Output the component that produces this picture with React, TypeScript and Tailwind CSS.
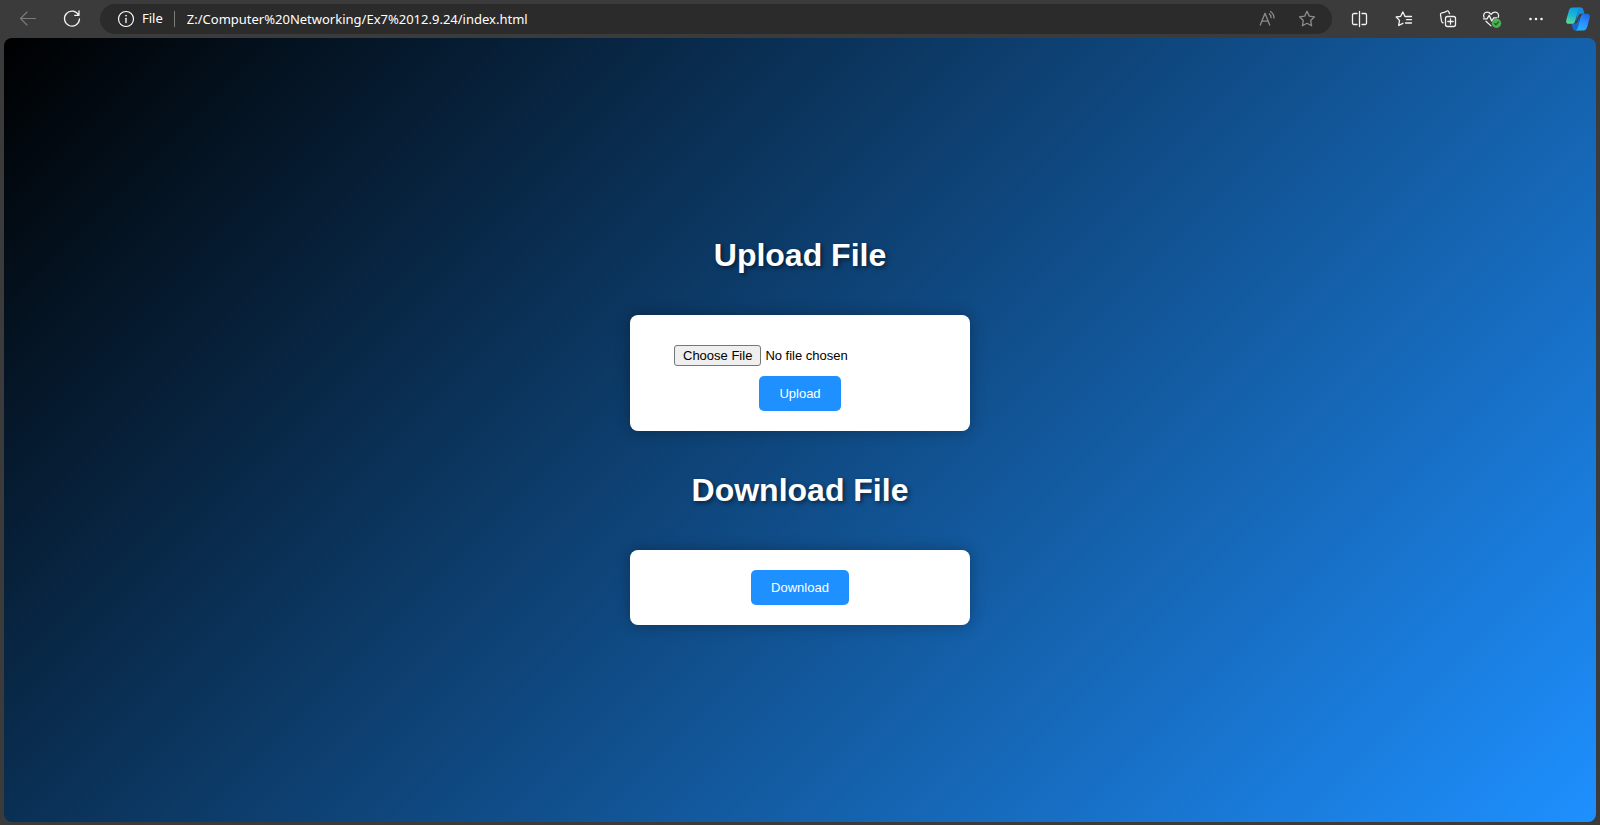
import type { ReactNode } from "react";

function Icon({ children }: { children: ReactNode }) {
  return (
    <svg
      viewBox="0 0 20 20"
      className="size-5"
      fill="none"
      stroke="currentColor"
      strokeWidth="1.3"
      strokeLinecap="round"
      strokeLinejoin="round"
      aria-hidden="true"
    >
      {children}
    </svg>
  );
}

function ToolButton({ label, className = "w-11 text-[#f2f2f2]", children }: { label: string; className?: string; children: ReactNode }) {
  return (
    <button type="button" aria-label={label} className={`flex h-8 shrink-0 items-center justify-center ${className}`}>
      {children}
    </button>
  );
}

function CopilotLogo() {
  return (
    <svg viewBox="0.400 0.400 23.200 23.200" className="size-6" aria-hidden="true">
      <defs>
        <linearGradient id="leftLeaf" x1="0.6" y1="0" x2="0.3" y2="1">
          <stop offset="0" stopColor="#0f9ae0" />
          <stop offset="0.5" stopColor="#19b8d6" />
          <stop offset="1" stopColor="#5bdc8a" />
        </linearGradient>
        <linearGradient id="rightLeaf" x1="0.7" y1="0" x2="0.3" y2="1">
          <stop offset="0" stopColor="#1f6ae6" />
          <stop offset="0.5" stopColor="#2b90ff" />
          <stop offset="1" stopColor="#23b4fb" />
        </linearGradient>
      </defs>
      <path d="M12 1h2.800c1.300 0 1.900.7 2.300 2l1.200 3.900h-3.100c-1.600 0-2.500.9-3 2.500l-2 5z" fill="#158fdc" />
      <path d="M12 23H9.200c-1.300 0-1.900-.7-2.300-2L5.500 16.300h3.400c1.600 0 2.500-.9 3-2.500l2-5z" fill="#1767cf" />
      <path d="M6.700 1h7.800c-1.300.2-1.900 1.200-2.300 2.500L9.400 13.600c-.6 2.200-1.600 3-3.600 3H3.200C.9 16.600.1 15 .7 12.700L3.200 4C3.800 2 4.700 1 6.700 1z" fill="url(#leftLeaf)" />
      <path d="M17.300 23H9.500c1.300-.2 1.900-1.200 2.300-2.500l2.800-10.600c.6-2.200 1.600-3 3.600-3h2.600c2.300 0 3.100 1.600 2.500 3.900L20.800 20c-.6 2-1.500 3-3.500 3z" fill="url(#rightLeaf)" />
    </svg>
  );
}

function Toolbar() {
  return (
    <header className="flex h-[38px] items-center bg-[#3b3b3b] pr-0.5 pl-1.5 font-['Noto_Sans',sans-serif] text-[13px] text-white">
      <ToolButton label="Back" className="w-11 text-[#7b7b7b]">
        <Icon>
          <path d="M17.500 9.500H2.500M9 3 2.500 9.500 9 16" strokeWidth="1.150" />
        </Icon>
      </ToolButton>
      <ToolButton label="Refresh">
        <Icon>
          <path d="M16.700 6.200A7.500 7.500 0 1 0 17.500 10M17 2v4.300h-4.300" />
        </Icon>
      </ToolButton>
      <div className="mx-1.5 flex h-[30px] min-w-0 flex-1 items-center rounded-full bg-[#2b2b2b] pr-[5px] pl-4">
        <span className="flex shrink-0 items-center gap-1.5">
          <Icon>
            <circle cx="10" cy="10" r="7.500" strokeWidth="1.150" />
            <path d="M10 9.300v4.200" />
            <circle cx="10" cy="6.700" r=".5" fill="currentColor" strokeWidth=".6" />
          </Icon>
          File
        </span>
        <span className="mr-3 ml-[11px] h-4 w-px shrink-0 bg-[#7b7b7b]" />
        <input
          type="text"
          aria-label="Address"
          defaultValue="Z:/Computer%20Networking/Ex7%2012.9.24/index.html"
          className="h-6 min-w-0 flex-1 bg-transparent outline-none"
        />
        <ToolButton label="Read aloud" className="w-10 text-[#8d8d8d]">
          <Icon>
            <path d="M3.300 16 8 4.300 12.700 16M4.900 12.200h6.200M12.300 4.800c1.200 1 1.800 2.300 1.800 3.900M13.500 2.500c2.200 1.500 3.500 3.700 3.500 6.500" />
          </Icon>
        </ToolButton>
        <ToolButton label="Add to favorites" className="w-10 text-[#8d8d8d]">
          <Icon>
            <path d="m10 2.300 2.300 4.800 5.200.7-3.800 3.700.9 5.300-4.600-2.500-4.600 2.500.9-5.300-3.800-3.700 5.200-.7z" />
          </Icon>
        </ToolButton>
      </div>
      <ToolButton label="Split screen">
        <Icon>
          <path d="M9.500 2.500v15M7 4.500H3.900A1.400 1.400 0 0 0 2.500 5.900v8.200a1.400 1.400 0 0 0 1.400 1.400H7M12 4.500h3.100a1.400 1.400 0 0 1 1.400 1.400v8.200a1.400 1.400 0 0 1-1.400 1.400H12" />
        </Icon>
      </ToolButton>
      <ToolButton label="Favorites">
        <Icon>
          <path d="M12.400 7.500H11L8.900 2.900 6.700 7.300l-4.500.7 3.300 3.400-.8 5.100 4.200-2.200M13 7.500h4.500M12.500 10.700h5M11.500 14h6" />
        </Icon>
      </ToolButton>
      <ToolButton label="Collections">
        <Icon>
          <rect x="7.500" y="7.500" width="10" height="10" rx="2" />
          <path d="M12.500 9.800v5.400M9.800 12.500h5.400M5 13.900 4.300 13.400c-.6-.4-.7-.8-.8-1.400L2.500 5.700c-.2-1 .4-1.600 1.300-1.800C6.300 3.600 7.400 3 8.500 2.200c.9-.6 1.800-.3 2.200.6l.9 1.800" />
        </Icon>
      </ToolButton>
      <ToolButton label="Browser essentials">
        <Icon>
          <path d="M2 8.300C.9 5.700 2.400 3.200 5.100 3.200c1.800 0 3 1 4 2.200 1-1.200 2.200-2.200 4-2.200 2.700 0 4.200 2.500 3.200 5.100M1.500 9.800H5l2.200-3.500 2.500 5.700 2-3.200h3M4 12.200l5 4.700" />
          <circle cx="14.500" cy="14.300" r="4.700" fill="#4caf50" stroke="none" />
          <path d="m12.500 14.400 1.400 1.400 2.700-2.900" stroke="#235c27" />
        </Icon>
      </ToolButton>
      <ToolButton label="Settings and more">
        <Icon>
          <g fill="currentColor" stroke="none">
            <circle cx="4.500" cy="10" r="1.300" />
            <circle cx="10" cy="10" r="1.300" />
            <circle cx="15.500" cy="10" r="1.300" />
          </g>
        </Icon>
      </ToolButton>
      <ToolButton label="Copilot" className="w-10">
        <CopilotLogo />
      </ToolButton>
    </header>
  );
}

const heading = "text-[32px] leading-[37px] font-bold text-white [text-shadow:2px_2px_4px_rgba(0,0,0,0.5)]";
const card = "flex w-[340px] max-w-full flex-col items-center rounded-lg bg-white p-5 shadow-[0_0_15px_rgba(0,0,0,0.3)]";
const action = "h-[35px] rounded-[5px] bg-[#1e90ff] px-5 text-white";

export default function App() {
  return (
    <div className="flex min-h-screen flex-col bg-[#3b3b3b]">
      <Toolbar />
      <main className="mx-1 mb-[3px] flex flex-1 flex-col items-center justify-center gap-[41px] rounded-lg bg-[linear-gradient(135deg,#000000,#1e90ff)] pt-0.5 font-['Liberation_Sans',Arial,sans-serif] text-[13px] leading-[15px]">
        <h1 className={heading}>Upload File</h1>
        <form className={card} onSubmit={(event) => event.preventDefault()}>
          <input
            type="file"
            aria-label="File to upload"
            className="my-2.5 h-[21px] w-[252px] text-black file:mr-1 file:h-[21px] file:rounded-[3px] file:border file:border-solid file:border-[#767676] file:bg-[#efefef] file:px-2 file:text-black"
          />
          <button type="submit" className={action}>Upload</button>
        </form>
        <h1 className={heading}>Download File</h1>
        <div className={card}>
          <button type="button" className={action}>Download</button>
        </div>
      </main>
    </div>
  );
}
